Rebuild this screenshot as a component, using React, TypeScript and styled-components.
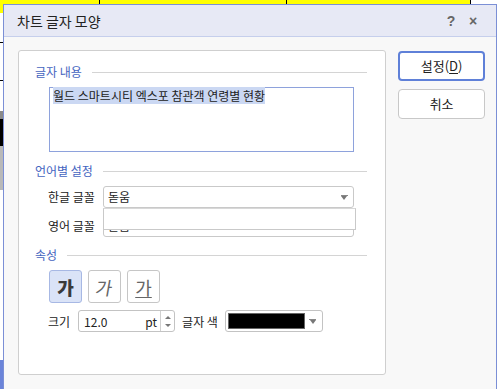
import React from 'react'
import styled, { createGlobalStyle } from 'styled-components'

const GlobalStyle = createGlobalStyle`
  html, body {
    margin: 0;
    padding: 0;
    background: #fff;
  }
  * {
    box-sizing: border-box;
  }
`

const font = `"Noto Sans CJK KR", "Noto Sans", sans-serif`

const Screen = styled.div`
  position: relative;
  width: 500px;
  height: 389px;
  overflow: hidden;
  font-family: ${font};
  background:
    linear-gradient(
        to right,
        #ffff00 99px,
        #000 99px 100px,
        #ffff00 100px 286px,
        #000 286px 287px,
        #ffff00 287px 470px,
        #000 470px 471px,
        #fff 471px
      )
      top left / 100% 4px no-repeat,
    linear-gradient(
        to bottom,
        #ffff00 0 13px,
        #fff 13px 42px,
        #000 42px 43px,
        #fff 43px 80px,
        #000 80px 81px,
        #fff 81px 111px,
        #8a8a8a 111px 119px,
        #000 119px 146px,
        #b9b9b9 146px 190px,
        #fff 190px 360px,
        #6b84d9 360px
      )
      left top / 3px 100% no-repeat,
    #fff;
`

const Dialog = styled.div`
  position: absolute;
  left: 3px;
  top: 4px;
  width: 494px;
  height: 400px;
  border: 1px solid #7b8fd6;
  background: #f8f8f8;
  display: flex;
  flex-direction: column;
`

const TitleBar = styled.div`
  height: 32px;
  flex: none;
  display: flex;
  align-items: center;
  padding: 0 12px 0 13px;
  background: #e7e9f5;
  border-bottom: 1px solid #c6cfec;
`

const Title = styled.div`
  flex: 1;
  font-size: 14px;
  color: #222;
  line-height: 16px;
  padding-top: 1px;
`

const TitleIcon = styled.span`
  width: 22px;
  text-align: center;
  font-family: 'Liberation Sans', Arial, sans-serif;
  font-size: 14px;
  font-weight: bold;
  color: #666;
`

const Body = styled.div`
  display: flex;
  padding: 13px 11px 0 14px;
  gap: 12px;
`

const Panel = styled.div`
  width: 369px;
  height: 325px;
  background: #fff;
  border: 1px solid #cfcfcf;
  border-radius: 3px;
  padding: 13px 18px 0 16px;
  position: relative;
`

const SectionHead = styled.div<{ $gap?: number }>`
  display: flex;
  align-items: center;
  height: 16px;
  margin-top: ${(p) => p.$gap ?? 0}px;
  font-size: 12px;
  color: #4464c0;
  line-height: 16px;
  white-space: nowrap;
  &::after {
    content: '';
    flex: 1;
    height: 1px;
    margin-left: 10px;
    background: #d4d4d4;
  }
`

const TextBox = styled.div`
  margin: 7px 0 0 14px;
  width: 305px;
  height: 65px;
  border: 1px solid #8ea2dc;
  padding: 0 3px;
  font-size: 12px;
  line-height: 16px;
  color: #222;
`

const Selected = styled.span`
  background: #cbd8f3;
`

const FieldRow = styled.div<{ $gap: number }>`
  display: flex;
  align-items: center;
  margin: ${(p) => p.$gap}px 0 0 13px;
  gap: 9px;
  font-size: 12px;
  color: #222;
`

const FieldLabel = styled.span`
  width: 46px;
  line-height: 14px;
  white-space: nowrap;
`

const Select = styled.div`
  position: relative;
  width: 251px;
  height: 22px;
  border: 1px solid #c9c9c9;
  border-radius: 3px;
  background: #fff;
  display: flex;
  align-items: center;
  padding-left: 4px;
  font-size: 12px;
  line-height: 14px;
  overflow: hidden;
`

const Arrow = styled.span`
  position: absolute;
  right: 6px;
  top: 50%;
  margin-top: -1px;
  width: 0;
  height: 0;
  border-left: 3.5px solid transparent;
  border-right: 3.5px solid transparent;
  border-top: 4px solid #777;
  &::before {
    content: '';
    position: absolute;
    left: -3.5px;
    top: -5px;
    width: 7px;
    height: 1px;
    background: #888;
  }
`

const Popup = styled.div`
  position: absolute;
  left: 84px;
  top: 157px;
  width: 253px;
  height: 22px;
  background: #fff;
  border: 1px solid #c9c9c9;
  border-top-color: #d8d8d8;
`

const StyleRow = styled.div`
  display: flex;
  gap: 6px;
  margin: 7px 0 0 14px;
`

const StyleButton = styled.div<{ $pressed?: boolean }>`
  width: 33px;
  height: 33px;
  border-radius: 3px;
  border: 1px solid ${(p) => (p.$pressed ? '#a7b8e4' : '#c6c6c6')};
  background: ${(p) => (p.$pressed ? '#dae3f7' : '#fff')};
  display: flex;
  align-items: center;
  justify-content: center;
  font-size: 18px;
  line-height: 20px;
  color: ${(p) => (p.$pressed ? '#3a3a3a' : '#666')};
`

const Glyph = styled.span<{ $kind: 'bold' | 'italic' | 'under' }>`
  font-weight: ${(p) => (p.$kind === 'bold' ? 900 : 400)};
  text-decoration: ${(p) => (p.$kind === 'under' ? 'underline' : 'none')};
  text-underline-offset: 2px;
  display: inline-block;
  transform: ${(p) => (p.$kind === 'italic' ? 'skewX(-10deg)' : 'none')};
`

const SizeRow = styled.div`
  display: flex;
  align-items: center;
  margin: 7px 0 0 13px;
  font-size: 12px;
  color: #222;
  white-space: nowrap;
`

const Spin = styled.div`
  margin-left: 8px;
  width: 97px;
  height: 22px;
  border: 1px solid #c3c3c3;
  border-radius: 3px;
  background: #fff;
  display: flex;
  align-items: center;
  font-size: 12px;
`

const SpinValue = styled.span`
  flex: 1;
  padding-left: 5px;
`

const SpinUnit = styled.span`
  padding-right: 3px;
`

const SpinArrows = styled.div`
  width: 14px;
  height: 100%;
  border-left: 1px solid #d0d0d0;
  display: flex;
  flex-direction: column;
  align-items: center;
  justify-content: center;
  gap: 5px;
`

const Tri = styled.span<{ $up?: boolean }>`
  width: 0;
  height: 0;
  border-left: 3px solid transparent;
  border-right: 3px solid transparent;
  ${(p) => (p.$up ? 'border-bottom: 3px solid #777;' : 'border-top: 3px solid #777;')}
`

const ColorLabel = styled.span`
  margin-left: 7px;
`

const ColorSelect = styled.div`
  position: relative;
  margin-left: 7px;
  width: 98px;
  height: 22px;
  border: 1px solid #c3c3c3;
  border-radius: 3px;
  background: #fff;
  padding: 2px;
`

const Swatch = styled.div`
  width: 77px;
  height: 16px;
  background: #000;
  border: 1px solid #666;
`

const Side = styled.div`
  display: flex;
  flex-direction: column;
  gap: 8px;
  width: 87px;
`

const Button = styled.div<{ $primary?: boolean }>`
  height: 30px;
  margin-top: ${(p) => (p.$primary ? 1 : 0)}px;
  border: ${(p) => (p.$primary ? '2px solid #5f80d8' : '1px solid #c8c8c8')};
  border-radius: 4px;
  background: #fff;
  display: flex;
  align-items: center;
  justify-content: center;
  font-size: 13px;
  color: #222;
  line-height: 16px;
  u {
    text-underline-offset: 2px;
  }
`

export default function App() {
  return (
    <Screen>
      <GlobalStyle />
      <Dialog>
        <TitleBar>
          <Title>차트 글자 모양</Title>
          <TitleIcon>?</TitleIcon>
          <TitleIcon>×</TitleIcon>
        </TitleBar>
        <Body>
          <Panel>
            <SectionHead>글자 내용</SectionHead>
            <TextBox>
              <Selected>월드 스마트시티 엑스포 참관객 연령별 현황</Selected>
            </TextBox>

            <SectionHead $gap={11}>언어별 설정</SectionHead>
            <FieldRow $gap={7}>
              <FieldLabel>한글 글꼴</FieldLabel>
              <Select>
                돋움
                <Arrow />
              </Select>
            </FieldRow>
            <FieldRow $gap={7}>
              <FieldLabel>영어 글꼴</FieldLabel>
              <Select>돋움</Select>
            </FieldRow>
            <Popup />

            <SectionHead $gap={10}>속성</SectionHead>
            <StyleRow>
              <StyleButton $pressed>
                <Glyph $kind='bold'>가</Glyph>
              </StyleButton>
              <StyleButton>
                <Glyph $kind='italic'>가</Glyph>
              </StyleButton>
              <StyleButton>
                <Glyph $kind='under'>가</Glyph>
              </StyleButton>
            </StyleRow>
            <SizeRow>
              <span>크기</span>
              <Spin>
                <SpinValue>12.0</SpinValue>
                <SpinUnit>pt</SpinUnit>
                <SpinArrows>
                  <Tri $up />
                  <Tri />
                </SpinArrows>
              </Spin>
              <ColorLabel>글자 색</ColorLabel>
              <ColorSelect>
                <Swatch />
                <Arrow />
              </ColorSelect>
            </SizeRow>
          </Panel>
          <Side>
            <Button $primary>
              <span>
                설정(<u>D</u>)
              </span>
            </Button>
            <Button>취소</Button>
          </Side>
        </Body>
      </Dialog>
    </Screen>
  )
}
